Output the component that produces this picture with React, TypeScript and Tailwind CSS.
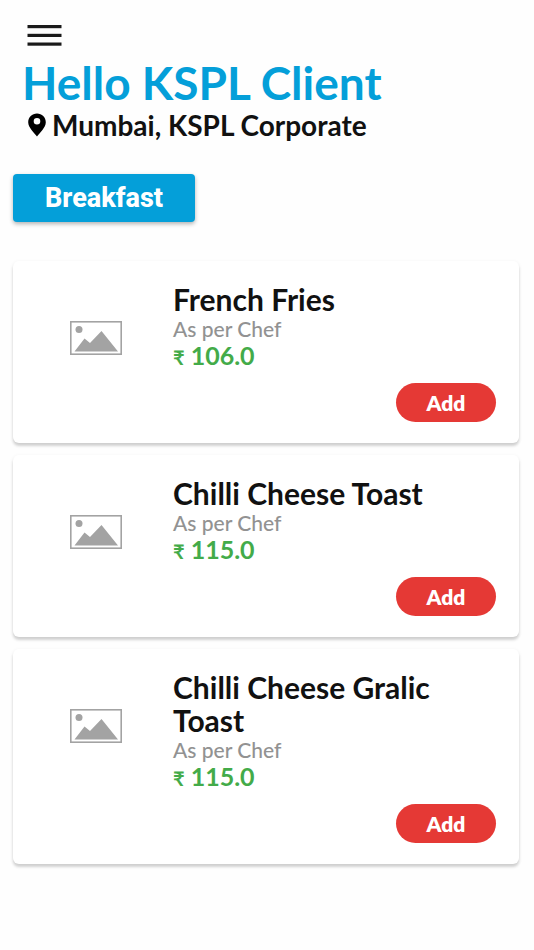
import { useState } from 'react';

type MenuItem = {
  id: number;
  name: string;
  description: string;
  price: number;
};

const menuItems: MenuItem[] = [
  { id: 1, name: 'French Fries', description: 'As per Chef', price: 106 },
  { id: 2, name: 'Chilli Cheese Toast', description: 'As per Chef', price: 115 },
  { id: 3, name: 'Chilli Cheese Gralic Toast', description: 'As per Chef', price: 115 },
];

function MenuIcon() {
  return (
    <svg className="w-9 h-6" viewBox="0 0 36 24" fill="#1a1a1a">
      <rect x="0.5" y="1" width="34" height="3.2" />
      <rect x="0.5" y="9.8" width="34" height="3.2" />
      <rect x="0.5" y="18.5" width="34" height="3.2" />
    </svg>
  );
}

function PinIcon() {
  return (
    <svg className="w-5 h-6 shrink-0" viewBox="0 0 20 24" fill="#000000">
      <path
        fillRule="evenodd"
        d="M10 0.5C5.1 0.5 1.2 4.4 1.2 9.2C1.2 14.6 7.2 19.6 10 23.5C12.8 19.6 18.8 14.6 18.8 9.2C18.8 4.4 14.9 0.5 10 0.5ZM10 4.9A3.3 3.3 0 1 1 10 11.5A3.3 3.3 0 1 1 10 4.9Z"
      />
    </svg>
  );
}

function PlaceholderImage() {
  return (
    <svg className="w-[52px] h-[34px]" viewBox="0 0 52 34" fill="none">
      <rect x="0.8" y="0.8" width="50.4" height="32.4" stroke="#a3a3a3" strokeWidth="1.6" />
      <circle cx="9" cy="8.5" r="3.5" fill="#a3a3a3" />
      <path d="M4.5 30.5L14.5 17.5L20 22L31.5 10L48 30.5Z" fill="#a3a3a3" />
    </svg>
  );
}

function ItemCard({ item }: { item: MenuItem }) {
  return (
    <article className="flex rounded-md bg-white pt-[22px] pb-[21px] pr-[23px] shadow-[0_3px_3px_rgba(0,0,0,0.16),0_1px_4px_rgba(0,0,0,0.06)]">
      {/* IMAGE */}
      <div className="w-40 shrink-0 pt-[38px] pl-[57px]">
        <PlaceholderImage />
      </div>

      {/* DETAILS */}
      <div className="flex flex-1 flex-col">
        <h2 className="text-[30px] leading-[33px] font-bold text-[#111111]">{item.name}</h2>
        <p className="text-[21px] leading-[25px] font-medium text-[#929292]">{item.description}</p>
        <p className="text-[25px] leading-[29px] font-bold text-[#43ab49]">
          <span className="text-[20px] leading-none">₹</span> {item.price.toFixed(1)}
        </p>
        <button className="mt-[13px] h-[39px] w-[100px] self-end rounded-full bg-[#e53935] text-[21px] font-extrabold text-white">
          Add
        </button>
      </div>
    </article>
  );
}

export default function App() {
  const [menuOpen, setMenuOpen] = useState(false);

  return (
    <div className="min-h-screen bg-[#fefefe] pt-6 pr-[15px] pl-[13px] font-['Lato',sans-serif]">
      {/* HEADER */}
      <header className="px-[9px]">
        <button
          className="ml-[5px] block"
          aria-label="Menu"
          aria-expanded={menuOpen}
          onClick={() => setMenuOpen(!menuOpen)}
        >
          <MenuIcon />
        </button>
        <h1 className="mt-2 text-[46px] leading-[54px] font-bold text-[#049fd9]">Hello KSPL Client</h1>
        <p className="ml-[5px] flex items-center gap-[5px] text-[28px] leading-[30px] font-bold text-[#111111]">
          <PinIcon />
          Mumbai, KSPL Corporate
        </p>
      </header>

      {/* CATEGORY */}
      <button className="mt-[34px] h-12 rounded-[4px] bg-[#049fd9] px-8 font-['Roboto',sans-serif] text-[27px] font-extrabold text-white shadow-[0_2px_4px_rgba(0,0,0,0.3)]">
        Breakfast
      </button>

      {/* ITEMS */}
      <main className="mt-[39px] flex flex-col gap-3 pb-3">
        {menuItems.map((item) => (
          <ItemCard key={item.id} item={item} />
        ))}
      </main>
    </div>
  );
}
